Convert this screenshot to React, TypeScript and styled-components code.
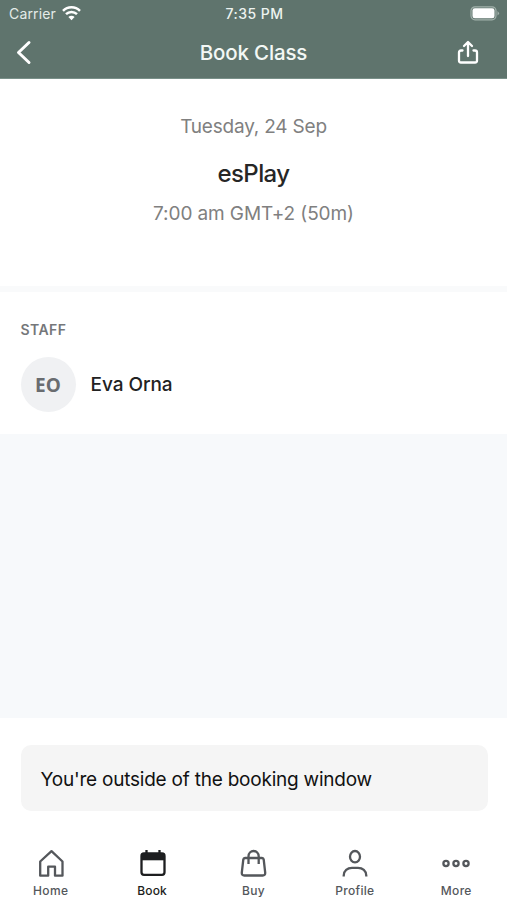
import React from "react";
import styled, { createGlobalStyle } from "styled-components";

const GlobalStyle = createGlobalStyle`
  * { box-sizing: border-box; }
  body { margin: 0; background: #fff; font-family: Inter, "Liberation Sans", sans-serif; }
`;

const Screen = styled.main`
  width: 100%;
  height: 900px;
  display: flex;
  flex-direction: column;
  overflow: hidden;
  background: #fff;
`;

const Header = styled.header`
  flex: 0 0 79px;
  background: #5f746d;
  color: #fff;
  border-bottom: 1px solid #799089;
`;

const StatusBar = styled.div`
  height: 27px;
  display: grid;
  grid-template-columns: 1fr auto 1fr;
  align-items: center;
  padding: 0 7px 0 9px;
`;

const Carrier = styled.div`
  display: flex;
  align-items: center;
  gap: 6px;
`;

const Battery = styled.svg`
  display: block;
  justify-self: end;
`;

const NavBar = styled.div`
  height: 51px;
  display: grid;
  grid-template-columns: 1fr auto 1fr;
  align-items: center;
  padding: 0 16px;
`;

const IconButton = styled.button<{ $end?: boolean }>`
  display: flex;
  padding: 0;
  border: 0;
  background: none;
  color: inherit;
  margin-right: ${(p) => (p.$end ? 11 : 0)}px;
  justify-self: ${(p) => (p.$end ? "end" : "start")};
`;

const Text = styled.span<{
  $size: number;
  $line: number;
  $weight?: number;
  $color?: string;
  $track?: number;
}>`
  display: block;
  white-space: nowrap;
  font-size: ${(p) => p.$size}px;
  line-height: ${(p) => p.$line}px;
  font-weight: ${(p) => p.$weight ?? 400};
  color: ${(p) => p.$color ?? "inherit"};
  letter-spacing: ${(p) => p.$track ?? 0}px;
`;

const Summary = styled.section`
  flex: 0 0 207px;
  display: flex;
  flex-direction: column;
  align-items: center;
  padding-top: 34px;
`;

const ClassName = styled.h1`
  margin: 17px 0 10px;
  font-size: 24px;
  line-height: 32px;
  font-weight: 500;
  letter-spacing: -0.6px;
  color: #262626;
`;

const Divider = styled.div`
  flex: 0 0 6px;
  background: #f9fafb;
`;

const Staff = styled.section`
  flex: 0 0 142px;
  padding: 28px 20.5px 0;
`;

const StaffRow = styled.div`
  display: flex;
  align-items: center;
  gap: 15px;
  margin-top: 17px;
`;

const Avatar = styled.div`
  width: 55px;
  height: 55px;
  border-radius: 50%;
  display: grid;
  place-items: center;
  background: #f0f1f3;
  color: #696c70;
  font: 700 19px/26px "Open Sans", sans-serif;
`;

const Filler = styled.div`
  flex: 1;
  background: #f7f9fb;
`;

const NoticeArea = styled.section`
  flex: 0 0 120px;
  padding: 27px 19.5px 0 20.5px;
`;

const Notice = styled.div`
  height: 66px;
  display: flex;
  align-items: center;
  padding: 4px 20px 0;
  border-radius: 10px;
  background: #f5f5f5;
`;

const TabBar = styled.nav`
  flex: 0 0 62px;
  display: grid;
  grid-template-columns: repeat(5, 1fr);
`;

const Tab = styled.a<{ $active?: boolean }>`
  display: flex;
  flex-direction: column;
  align-items: center;
  padding-top: 10px;
  gap: 5px;
  color: ${(p) => (p.$active ? "#1d1e20" : "#54575b")};
`;

const TabIcon = styled.svg`
  display: block;
  width: 30px;
  height: 30px;
  fill: none;
  stroke: currentColor;
  stroke-width: 2.3;
`;

const tabs = [
  {
    name: "Home",
    track: 0.35,
    icon: <path d="M4.200 13.500 15.500 3.200 26.500 13.500V27.700H19V18.700H12.200V27.700H4.200Z" strokeLinejoin="round" />,
  },
  {
    name: "Book",
    track: 0.2,
    active: true,
    icon: (
      <>
        <rect x="4.500" y="5.500" width="23" height="21.300" rx="2.500" />
        <path d="M4.500 5.500h23v6.800h-23Z" fill="currentColor" stroke="none" />
        <path d="M9.500 2v4M22.500 2v4" />
      </>
    ),
  },
  {
    name: "Buy",
    track: 0.3,
    icon: (
      <>
        <path d="M7 10h17q1.500 0 1.700 1.500l1.500 13.200q.2 2.800-2.500 2.800H6.300q-2.700 0-2.500-2.800L5.300 11.500Q5.500 10 7 10Z" />
        <path d="M10.500 16V8.200a5.100 5.200 0 0 1 10.200 0V16" />
      </>
    ),
  },
  {
    name: "Profile",
    track: 0.3,
    icon: (
      <>
        <ellipse cx="15" cy="8.700" rx="5" ry="5.700" />
        <path d="M3.700 28.500v-.8c0-5 3.800-7.800 8.300-7.800h6c4.500 0 8.300 2.800 8.300 7.800v.8" />
      </>
    ),
  },
  {
    name: "More",
    track: 0.3,
    icon: (
      <>
        <circle cx="5" cy="15.500" r="2.600" />
        <circle cx="15" cy="15.500" r="2.600" />
        <circle cx="25" cy="15.500" r="2.600" />
      </>
    ),
  },
];

export default function App() {
  return (
    <>
      <GlobalStyle />
      <Screen>
        <Header>
          <StatusBar>
            <Carrier>
              <Text $size={14} $line={20} $track={0.15} $color="#e4ebe8">Carrier</Text>
              <svg width="19" height="15" viewBox="0 0 19 15" fill="none" stroke="#fff" strokeWidth="2.500">
                <path d="M1 4.800a12 12 0 0 1 17 0M4 8.200a7.800 7.800 0 0 1 11 0" />
                <path d="M6.400 11a4.400 4.400 0 0 1 6.200 0l-3.100 3.200Z" fill="#fff" stroke="none" />
              </svg>
            </Carrier>
            <Text $size={14} $line={20} $weight={500} $track={0.45} $color="#edf3f0">7:35 PM</Text>
            <Battery width="30" height="15" viewBox="0 0 30 15">
              <rect x="1" y=".8" width="25" height="13" rx="4" fill="none" stroke="#a2b1ab" strokeWidth="1.200" />
              <rect x="2.500" y="2.300" width="22" height="10" rx="2.300" fill="#fff" />
              <path d="M27.500 5q3 2.300 0 4.600Z" fill="#a2b1ab" />
            </Battery>
          </StatusBar>
          <NavBar>
            <IconButton aria-label="Back">
              <svg width="17" height="26" viewBox="0 0 17 26" fill="none" stroke="currentColor" strokeWidth="3" strokeLinecap="round" strokeLinejoin="round">
                <path d="M13 2.500 2.500 12.500 13 22.500" />
              </svg>
            </IconButton>
            <Text $size={20.5} $line={28} $weight={500} $track={-0.16} $color="#f3f8f5">Book Class</Text>
            <IconButton $end aria-label="Share">
              <svg width="24" height="26" viewBox="0 0 24 26" fill="none" stroke="currentColor" strokeWidth="2.300" strokeLinecap="round" strokeLinejoin="round">
                <path d="M6.500 10.500H5q-2 0-2 2v8q0 2 2 2h14q2 0 2-2v-8q0-2-2-2h-1.500M12 16V2.500M8 6 12 2l4 4" />
              </svg>
            </IconButton>
          </NavBar>
        </Header>
        <Summary>
          <Text $size={19} $line={28} $track={-0.2} $color="#808080">Tuesday, 24 Sep</Text>
          <ClassName>esPlay</ClassName>
          <Text $size={19} $line={28} $track={-0.1} $color="#808080">7:00 am GMT+2 (50m)</Text>
        </Summary>
        <Divider />
        <Staff>
          <Text $size={14} $line={20} $weight={600} $track={0.4} $color="#75777a">STAFF</Text>
          <StaffRow>
            <Avatar>EO</Avatar>
            <Text $size={19} $line={26} $weight={500} $track={-0.05} $color="#222">Eva Orna</Text>
          </StaffRow>
        </Staff>
        <Filler />
        <NoticeArea>
          <Notice>
            <Text $size={19} $line={28} $track={-0.22} $color="#111">You're outside of the booking window</Text>
          </Notice>
        </NoticeArea>
        <TabBar>
          {tabs.map((tab) => (
            <Tab key={tab.name} $active={tab.active}>
              <TabIcon viewBox="0 0 30 30">{tab.icon}</TabIcon>
              <Text $size={12} $line={16} $weight={500} $track={tab.track}>{tab.name}</Text>
            </Tab>
          ))}
        </TabBar>
      </Screen>
    </>
  );
}
